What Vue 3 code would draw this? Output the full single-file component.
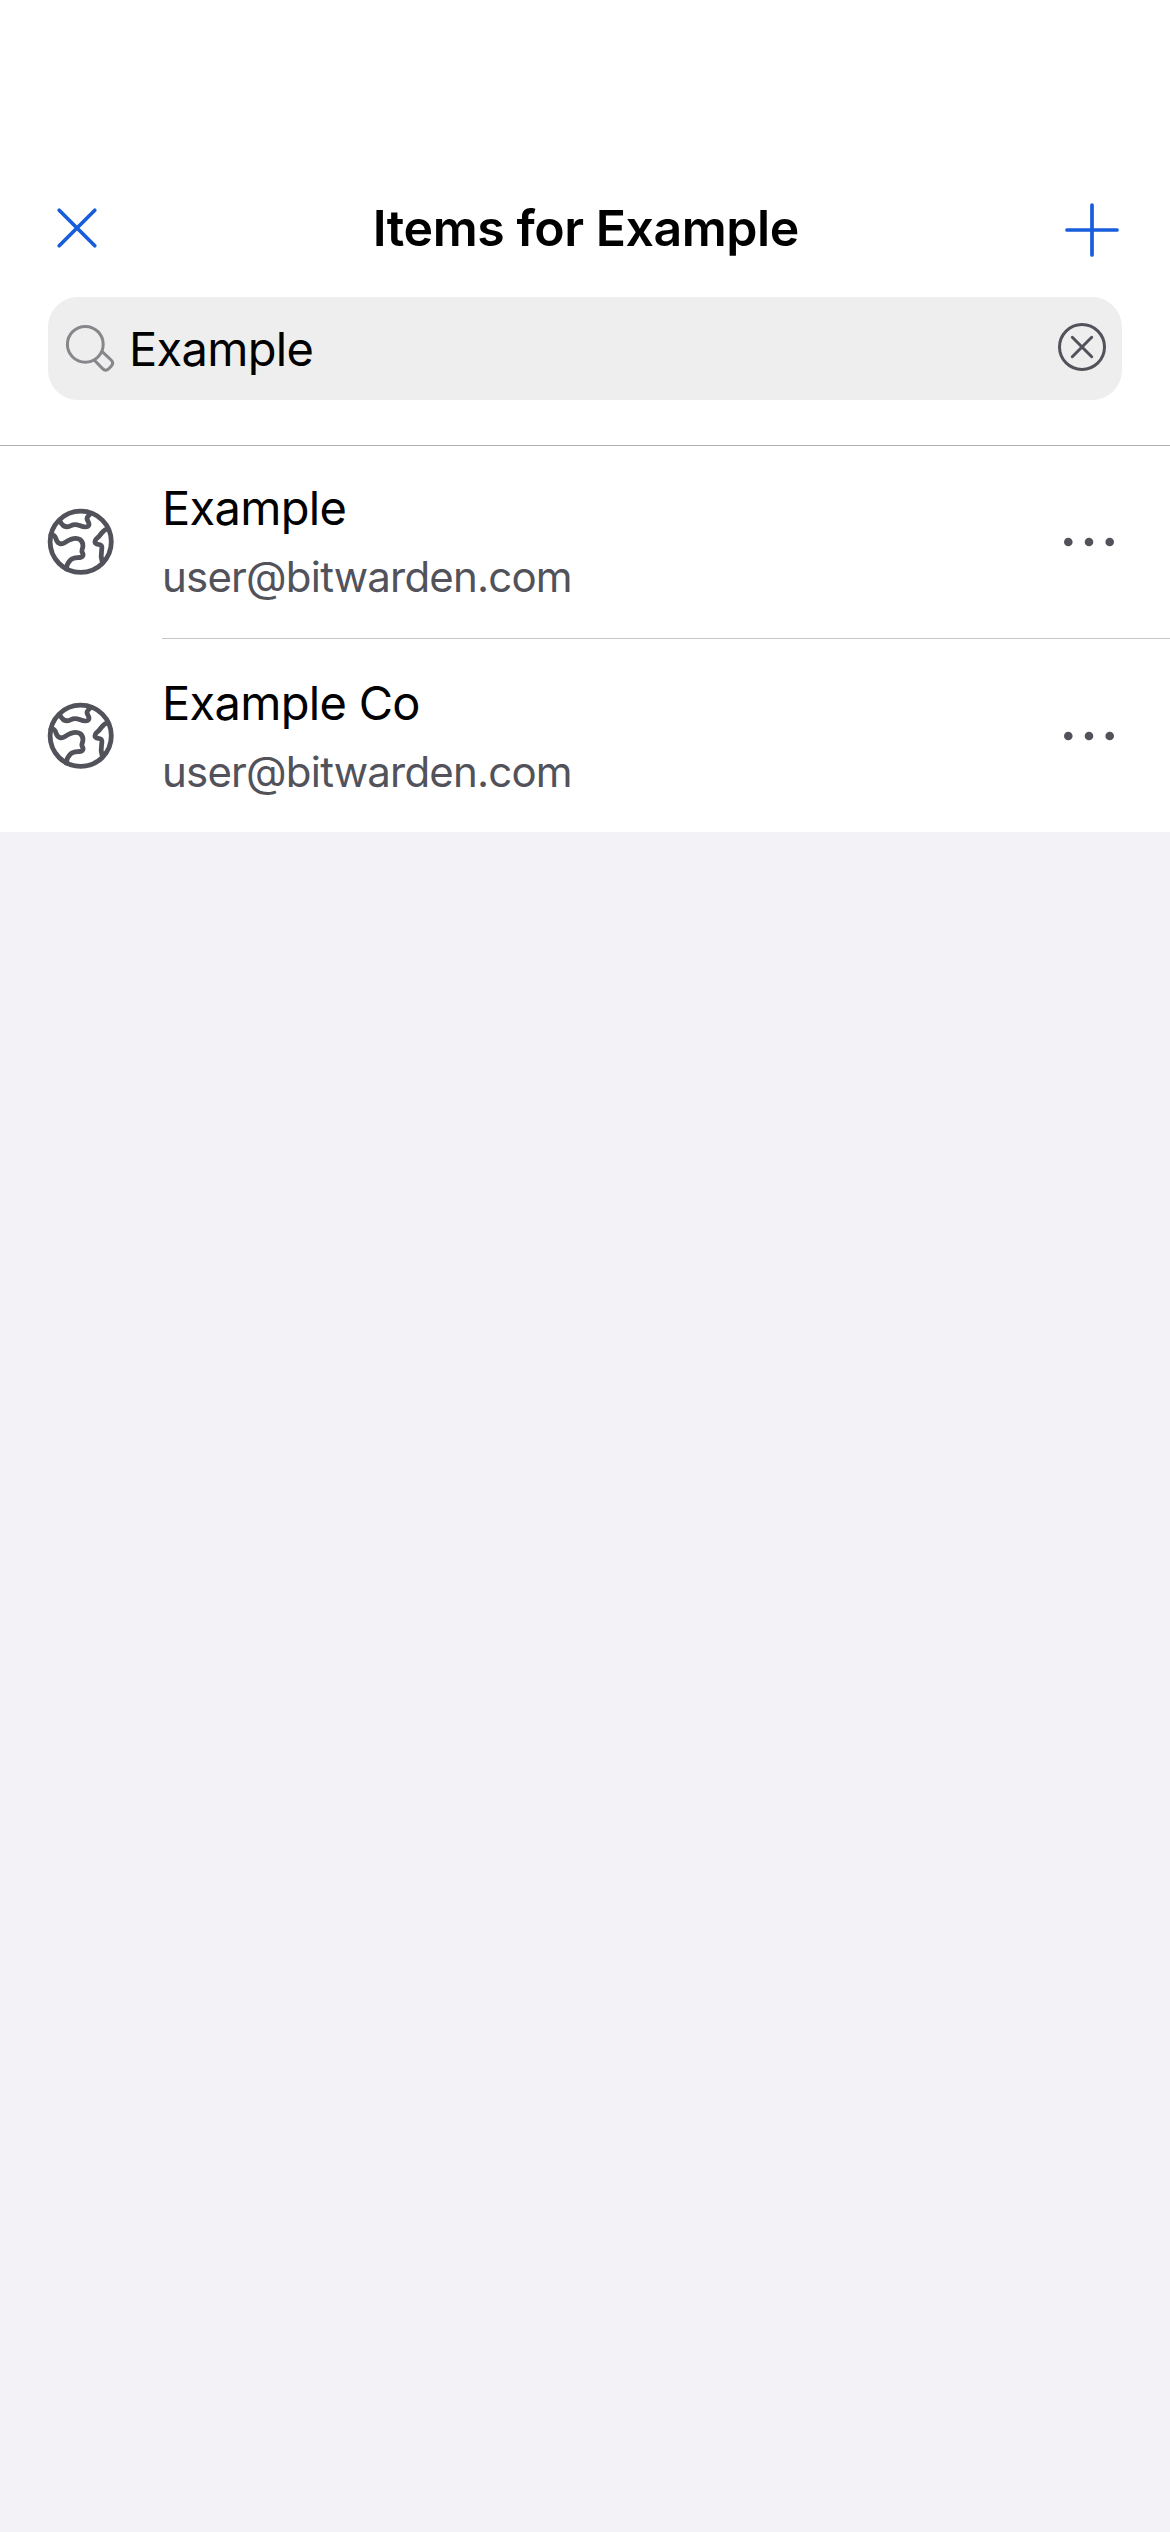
<script setup>
const query = 'Example'
const items = [
  { name: 'Example', user: 'user@bitwarden.com' },
  { name: 'Example Co', user: 'user@bitwarden.com' },
]
</script>

<template>
  <div class="screen">
    <header class="header">
      <div class="nav">
        <svg class="close" viewBox="0 0 48 48"><path d="M6.2 6.2 41.8 41.8M41.8 6.2 6.2 41.8" /></svg>
        <h1 class="title">Items for Example</h1>
        <svg class="add" viewBox="0 0 60 60"><path d="M30 5V55M5 30H55" /></svg>
      </div>
      <div class="search">
        <svg class="lens" viewBox="0 0 48 48">
          <circle cx="19.3" cy="19.3" r="17.9" />
          <path d="M28.4 35.2 36.6 43.6Q39.6 46.8 42.7 43.7L45.3 41.1Q48.2 38 45.1 35L36.2 26.6" />
        </svg>
        <span class="query">{{ query }}</span>
        <svg class="clear" viewBox="0 0 48 48">
          <circle cx="24" cy="24" r="22.5" />
          <path d="M14.3 14.3 33.7 33.7M33.7 14.3 14.3 33.7" />
        </svg>
      </div>
    </header>
    <main class="list">
      <article v-for="item in items" :key="item.name" class="row">
        <svg class="globe" viewBox="0 0 72 72">
          <circle cx="35.7" cy="35.8" r="30.6" />
          <path d="M15.2 15.5C17.5 20.2 20.5 22.2 25.5 19.8C28.5 18.3 31 18.2 34.5 19.4C38 20.8 41.8 22 43.5 19.8C45.3 17.3 42.2 15.2 42 12.8C41.9 10.8 43.5 9.6 45.5 7.5" />
          <path d="M6 29.2C10.5 28.2 10.2 31.5 11.4 34C13 38 16.5 38.8 20 36.4C25 33.2 30.5 30.6 35 33.5C38.2 36 38.5 40 37 44C36 46.8 39.5 47.5 37.5 50.2C35.5 52.8 29.5 50.4 25.5 54C22 57.2 21.5 60.5 21.2 63" />
          <path d="M63 22.6C57.5 23.5 56.5 28.5 53 31.3C50.5 33.5 49 36 50.8 37.5C52.5 39 56 37.3 56.8 40.5C57.5 43.5 54.8 48.5 57 55" />
        </svg>
        <div class="body">
          <div class="text">
            <div class="name">{{ item.name }}</div>
            <div class="user">{{ item.user }}</div>
          </div>
          <svg class="more" viewBox="0 0 52 10">
            <circle cx="5.3" cy="5" r="4.3" /><circle cx="26" cy="5" r="4.3" /><circle cx="46.7" cy="5" r="4.3" />
          </svg>
        </div>
      </article>
    </main>
  </div>
</template>

<style>
body { margin: 0; background: #f2f2f7; }
</style>

<style scoped>
.screen {
  width: 1170px;
  min-height: 2532px;
  background: #f2f2f7;
  font-family: Inter, "Liberation Sans", sans-serif;
  color: #000;
}
svg { display: block; flex: none; fill: none; stroke-linecap: round; stroke-linejoin: round; }
.header {
  box-sizing: border-box;
  height: 446px;
  padding: 198px 48px 0;
  background: #fff;
  border-bottom: 1px solid #b2b2b2;
}
.nav { display: flex; align-items: center; justify-content: space-between; height: 60px; padding: 0 0 0 4.5px; margin-bottom: 39px; }
.close { width: 48px; height: 48px; stroke: #175ddc; stroke-width: 3.7; }
.title { margin: 0 0 0 9px; font-size: 50px; line-height: 60px; font-weight: 600; letter-spacing: -0.45px; white-space: nowrap; }
.add { width: 60px; height: 60px; margin-top: 4px; stroke: #175ddc; stroke-width: 3.7; }
.search {
  box-sizing: border-box;
  display: flex;
  align-items: center;
  height: 103px;
  padding: 0 16px 0 18px;
  background: #eee;
  border-radius: 30px;
}
.lens { width: 48px; height: 48px; stroke: #87878b; stroke-width: 3; overflow: visible; }
.query { flex: 1; margin-left: 15px; font-size: 47px; line-height: 56px; letter-spacing: -0.7px; }
.clear { width: 48px; height: 48px; margin-top: -3px; stroke: #52525b; stroke-width: 3; }
.list { background: #fff; }
.row { display: flex; align-items: flex-start; height: 193px; padding-left: 45px; }
.globe { width: 72px; height: 72px; margin-top: 60px; stroke: #52525b; stroke-width: 4.8; }
.body {
  box-sizing: border-box;
  display: flex;
  flex: 1;
  align-items: flex-start;
  justify-content: space-between;
  height: 193px;
  margin-left: 45px;
  padding: 34px 55px 0 0;
  border-bottom: 1px solid #c6c6c8;
}
.row:last-child .globe { margin-top: 61px; }
.row:last-child .body { padding-top: 36px; border-bottom: 0; }
.name { font-size: 47px; line-height: 56px; letter-spacing: -0.7px; }
.user { margin-top: 16px; font-size: 42px; line-height: 50px; letter-spacing: -0.8px; color: #52525b; }
.more { width: 52px; height: 10px; margin-top: 57px; fill: #52525b; }
.row:last-child .more { margin-top: 56px; }
</style>
